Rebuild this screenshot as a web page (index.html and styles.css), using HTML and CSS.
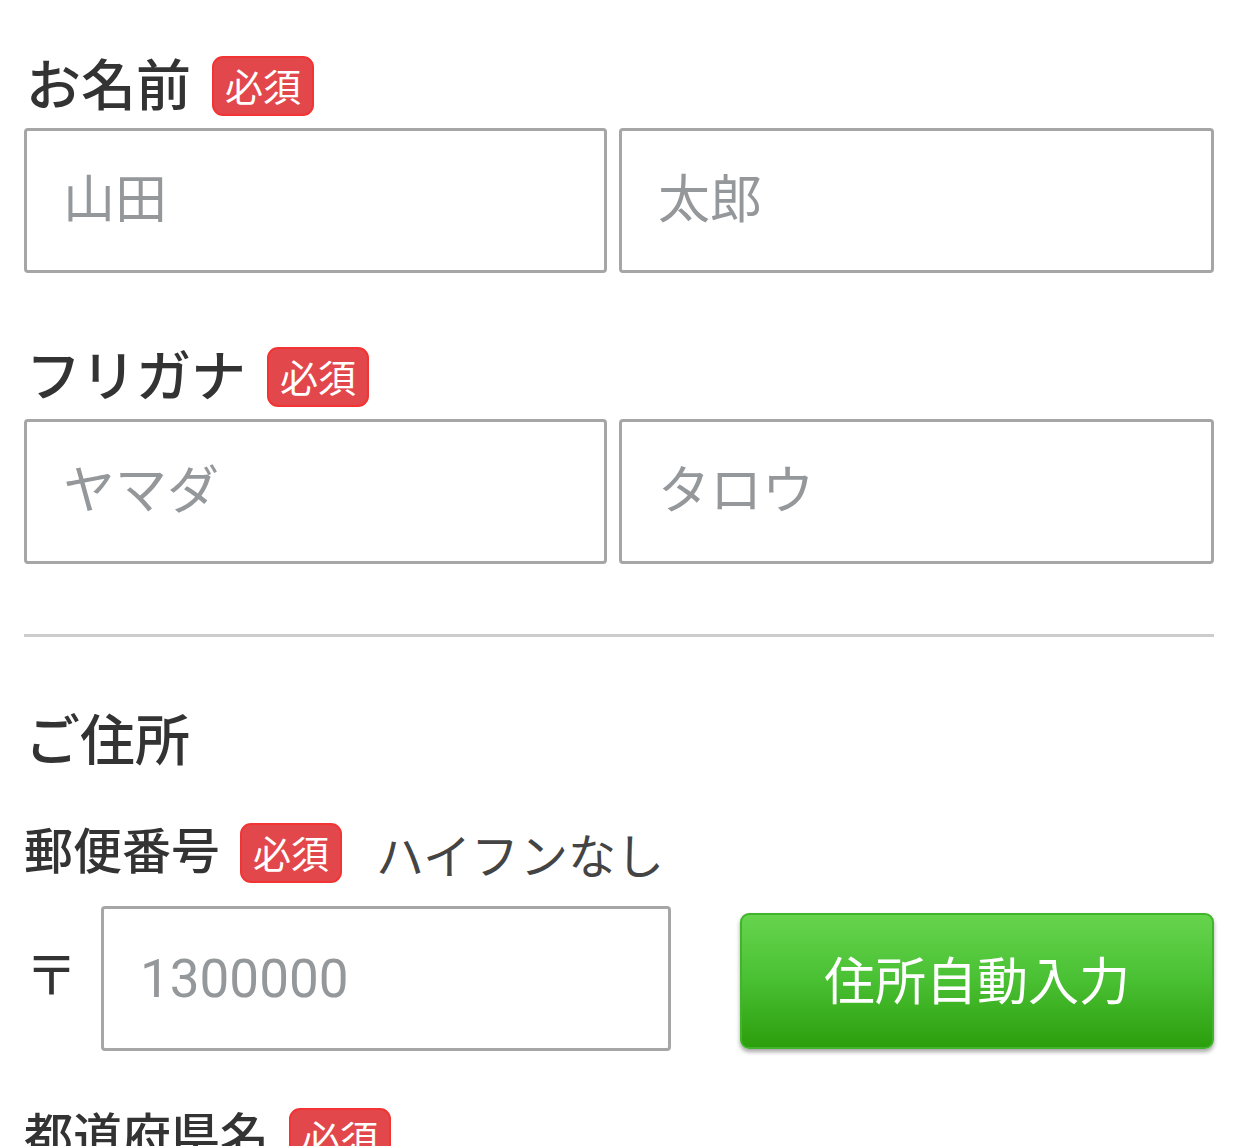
FILE: index.html
```html
<!DOCTYPE html>
<html lang="ja">
<head>
<meta charset="utf-8">
<title>フォーム</title>
<link rel="stylesheet" href="styles.css">
</head>
<body>
<div class="wrap">
  <div class="label-row first">
    <span class="label">お名前</span><span class="badge">必須</span>
  </div>
  <div class="inputs">
    <input class="field left" type="text" placeholder="山田">
    <input class="field right" type="text" placeholder="太郎">
  </div>

  <div class="label-row">
    <span class="label">フリガナ</span><span class="badge">必須</span>
  </div>
  <div class="inputs">
    <input class="field left" type="text" placeholder="ヤマダ">
    <input class="field right" type="text" placeholder="タロウ">
  </div>

  <hr class="divider">

  <h2 class="heading">ご住所</h2>

  <div class="label-row sub">
    <span class="label small">郵便番号</span><span class="badge">必須</span><span class="note">ハイフンなし</span>
  </div>
  <div class="postal-row">
    <span class="mark">〒</span>
    <input class="field postal" type="text" placeholder="1300000">
    <button class="auto-btn" type="button">住所自動入力</button>
  </div>

  <div class="label-row pref">
    <span class="label small">都道府県名</span><span class="badge">必須</span>
  </div>
</div>
</body>
</html>
```

FILE: styles.css
```css
html, body {
  margin: 0;
  padding: 0;
  background: #ffffff;
}
body {
  font-family: "Roboto", "Noto Sans CJK JP", sans-serif;
  color: #333333;
  overflow: hidden;
  height: 1146px;
}
.wrap {
  padding: 56px 26px 0 24px;
}
.label-row {
  display: flex;
  align-items: center;
  height: 60px;
  margin: 74px 0 12px 0;
}
.label-row.first {
  margin-top: 0;
}
.label {
  font-size: 55px;
  line-height: 60px;
  font-weight: 500;
  color: #333333;
  padding-left: 2px;
}
.label.small {
  font-size: 49px;
  padding-left: 0;
}
.badge {
  box-sizing: border-box;
  height: 60px;
  width: 102px;
  margin-left: 21px;
  border: 2px solid #f23434;
  border-radius: 11px;
  background: #e2474b;
  color: #ffffff;
  font-family: "Noto Sans CJK JP", sans-serif;
  font-size: 38px;
  line-height: 54px;
  text-align: center;
}
.label.small + .badge {
  margin-left: 20px;
}
.note {
  margin-left: 34px;
  font-size: 48px;
  color: #444444;
  font-family: "Noto Sans CJK JP", sans-serif;
}
.inputs {
  display: flex;
  gap: 12px;
}
.field {
  box-sizing: border-box;
  height: 145px;
  border: 3px solid #a6a6a6;
  border-radius: 4px;
  padding: 0 0 0 36px;
  margin: 0;
  font-family: "Roboto", "Noto Sans CJK JP", sans-serif;
  font-size: 52px;
  color: #333333;
  background: #ffffff;
  outline: none;
}
.field::placeholder {
  color: #95989b;
  opacity: 1;
}
.field.left {
  width: 583px;
}
.field.right {
  width: 595px;
}
.divider {
  border: 0;
  height: 3px;
  background: #cccccc;
  margin: 70px 0 0 0;
}
.heading {
  margin: 74px 0 0 0;
  font-size: 55px;
  line-height: 60px;
  font-weight: 500;
  color: #333333;
  padding-left: 1px;
}
.label-row.sub {
  margin-top: 52px;
  margin-bottom: 23px;
}
.postal-row {
  display: flex;
  align-items: flex-end;
}
.mark {
  width: 77px;
  align-self: center;
  margin-bottom: 14px;
  font-family: "Noto Sans CJK JP", sans-serif;
  font-size: 53px;
  line-height: 60px;
  color: #333333;
  padding-left: 1px;
  box-sizing: border-box;
}
.field.postal {
  width: 570px;
  padding-left: 36px;
  font-size: 53px;
}
.auto-btn {
  box-sizing: border-box;
  width: 474px;
  height: 136px;
  margin: 0 0 2px 69px;
  border: 2px solid #40b52c;
  border-radius: 9px;
  background: linear-gradient(to bottom, #66d44d 0%, #4cc236 45%, #2b9e0c 100%);
  box-shadow: 0 3px 4px rgba(0, 0, 0, 0.35);
  color: #ffffff;
  font-family: "Noto Sans CJK JP", sans-serif;
  font-size: 51px;
  padding: 0 0 6px 0;
  cursor: pointer;
}
.label-row.pref {
  margin-top: 57px;
}
```
